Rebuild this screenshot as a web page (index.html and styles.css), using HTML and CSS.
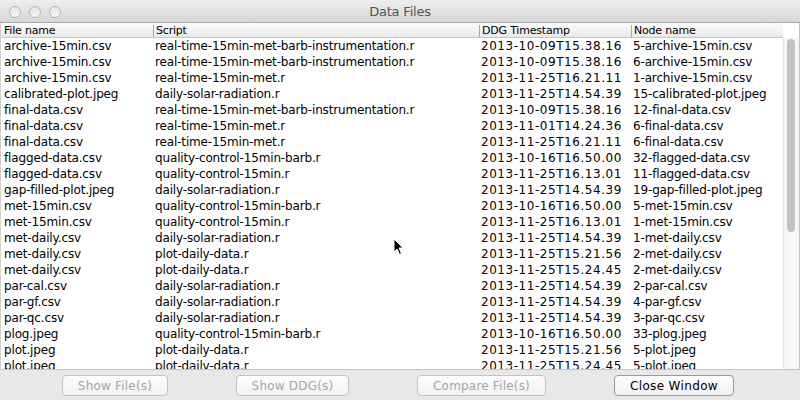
FILE: index.html
```html
<!DOCTYPE html>
<html>
<head>
<meta charset="utf-8">
<link rel="stylesheet" href="styles.css">
</head>
<body>
<div class="window">
  <div class="titlebar">
    <div class="lights"><span class="light"></span><span class="light"></span><span class="light"></span></div>
    <div class="title">Data Files</div>
  </div>
  <div class="pane">
    <div class="table">
      <div class="row head">
        <div class="cell">File name</div>
        <div class="cell sep">Script</div>
        <div class="cell sep">DDG Timestamp</div>
        <div class="cell sep">Node name</div>
      </div>
      <div class="body">
        <div class="row"><div class="cell">archive-15min.csv</div><div class="cell">real-time-15min-met-barb-instrumentation.r</div><div class="cell ts">2013-10-09T15.38.16</div><div class="cell">5-archive-15min.csv</div></div>
        <div class="row"><div class="cell">archive-15min.csv</div><div class="cell">real-time-15min-met-barb-instrumentation.r</div><div class="cell ts">2013-10-09T15.38.16</div><div class="cell">6-archive-15min.csv</div></div>
        <div class="row"><div class="cell">archive-15min.csv</div><div class="cell">real-time-15min-met.r</div><div class="cell ts">2013-11-25T16.21.11</div><div class="cell">1-archive-15min.csv</div></div>
        <div class="row"><div class="cell">calibrated-plot.jpeg</div><div class="cell">daily-solar-radiation.r</div><div class="cell ts">2013-11-25T14.54.39</div><div class="cell">15-calibrated-plot.jpeg</div></div>
        <div class="row"><div class="cell">final-data.csv</div><div class="cell">real-time-15min-met-barb-instrumentation.r</div><div class="cell ts">2013-10-09T15.38.16</div><div class="cell">12-final-data.csv</div></div>
        <div class="row"><div class="cell">final-data.csv</div><div class="cell">real-time-15min-met.r</div><div class="cell ts">2013-11-01T14.24.36</div><div class="cell">6-final-data.csv</div></div>
        <div class="row"><div class="cell">final-data.csv</div><div class="cell">real-time-15min-met.r</div><div class="cell ts">2013-11-25T16.21.11</div><div class="cell">6-final-data.csv</div></div>
        <div class="row"><div class="cell">flagged-data.csv</div><div class="cell">quality-control-15min-barb.r</div><div class="cell ts">2013-10-16T16.50.00</div><div class="cell">32-flagged-data.csv</div></div>
        <div class="row"><div class="cell">flagged-data.csv</div><div class="cell">quality-control-15min.r</div><div class="cell ts">2013-11-25T16.13.01</div><div class="cell">11-flagged-data.csv</div></div>
        <div class="row"><div class="cell">gap-filled-plot.jpeg</div><div class="cell">daily-solar-radiation.r</div><div class="cell ts">2013-11-25T14.54.39</div><div class="cell">19-gap-filled-plot.jpeg</div></div>
        <div class="row"><div class="cell">met-15min.csv</div><div class="cell">quality-control-15min-barb.r</div><div class="cell ts">2013-10-16T16.50.00</div><div class="cell">5-met-15min.csv</div></div>
        <div class="row"><div class="cell">met-15min.csv</div><div class="cell">quality-control-15min.r</div><div class="cell ts">2013-11-25T16.13.01</div><div class="cell">1-met-15min.csv</div></div>
        <div class="row"><div class="cell">met-daily.csv</div><div class="cell">daily-solar-radiation.r</div><div class="cell ts">2013-11-25T14.54.39</div><div class="cell">1-met-daily.csv</div></div>
        <div class="row"><div class="cell">met-daily.csv</div><div class="cell">plot-daily-data.r</div><div class="cell ts">2013-11-25T15.21.56</div><div class="cell">2-met-daily.csv</div></div>
        <div class="row"><div class="cell">met-daily.csv</div><div class="cell">plot-daily-data.r</div><div class="cell ts">2013-11-25T15.24.45</div><div class="cell">2-met-daily.csv</div></div>
        <div class="row"><div class="cell">par-cal.csv</div><div class="cell">daily-solar-radiation.r</div><div class="cell ts">2013-11-25T14.54.39</div><div class="cell">2-par-cal.csv</div></div>
        <div class="row"><div class="cell">par-gf.csv</div><div class="cell">daily-solar-radiation.r</div><div class="cell ts">2013-11-25T14.54.39</div><div class="cell">4-par-gf.csv</div></div>
        <div class="row"><div class="cell">par-qc.csv</div><div class="cell">daily-solar-radiation.r</div><div class="cell ts">2013-11-25T14.54.39</div><div class="cell">3-par-qc.csv</div></div>
        <div class="row"><div class="cell">plog.jpeg</div><div class="cell">quality-control-15min-barb.r</div><div class="cell ts">2013-10-16T16.50.00</div><div class="cell">33-plog.jpeg</div></div>
        <div class="row"><div class="cell">plot.jpeg</div><div class="cell">plot-daily-data.r</div><div class="cell ts">2013-11-25T15.21.56</div><div class="cell">5-plot.jpeg</div></div>
        <div class="row"><div class="cell">plot.jpeg</div><div class="cell">plot-daily-data.r</div><div class="cell ts">2013-11-25T15.24.45</div><div class="cell">5-plot.jpeg</div></div>
      </div>
    </div>
    <div class="scroll">
      <div class="corner"></div>
      <div class="track"><div class="thumb"></div></div>
    </div>
  </div>
  <div class="buttons">
    <button class="btn disabled b1">Show File(s)</button>
    <button class="btn disabled b2">Show DDG(s)</button>
    <button class="btn disabled b3">Compare File(s)</button>
    <button class="btn b4">Close Window</button>
  </div>
  <svg class="cursor" width="12" height="18" viewBox="0 0 12 18">
    <path d="M1 1 L1 14 L4 11 L6.5 16.5 L8.5 15.5 L6 10 L10 10 Z" fill="#000" stroke="#fff" stroke-width="1"/>
  </svg>
</div>
</body>
</html>
```

FILE: styles.css
```css
* { box-sizing: border-box; }
html, body { margin: 0; padding: 0; }
body {
  width: 800px;
  height: 400px;
  overflow: hidden;
  font-family: "DejaVu Sans", sans-serif;
  background: #ececec;
}
.window {
  position: relative;
  width: 800px;
  height: 400px;
  display: flex;
  flex-direction: column;
  background: #e8e8e8;
}
.titlebar {
  height: 23px;
  flex: none;
  position: relative;
  background: linear-gradient(#eeeeee, #d6d6d6);
  border-bottom: 1px solid #a9a9a9;
  display: flex;
  align-items: center;
  justify-content: center;
}
.lights {
  position: absolute;
  left: 9px;
  top: 6px;
  display: flex;
  gap: 8px;
}
.light {
  width: 12px;
  height: 12px;
  border-radius: 50%;
  border: 1px solid #b4b4b4;
  background: linear-gradient(#e4e4e4, #f6f6f6);
}
.title {
  font-size: 13px;
  color: #555;
  letter-spacing: -0.2px;
}
.pane {
  height: 347px;
  flex: none;
  display: flex;
  background: #fff;
  border-bottom: 1px solid #c4c4c4;
  border-right: 1px solid #c4c4c4;
  border-left: 1px solid #d0d0d0;
  overflow: hidden;
}
.table {
  width: 782px;
  flex: none;
  overflow: hidden;
}
.row {
  display: grid;
  grid-template-columns: 152px 326px 152px 152px;
  height: 16px;
  align-items: center;
  font-size: 12px;
  letter-spacing: -0.15px;
  color: #000;
}
.cell {
  padding-left: 2px;
  white-space: nowrap;
  overflow: hidden;
  line-height: 16px;
}
.cell.ts { letter-spacing: 0.55px; }
.row .cell:first-child { padding-left: 3px; }
.head {
  height: 15px;
  font-size: 11px;
  letter-spacing: -0.2px;
  background: linear-gradient(#fbfbfb, #e9e9e9);
  border-bottom: 1px solid #c6c6c6;
  align-items: end;
}
.head .cell { line-height: 12px; height: 12px; margin-bottom: 0; }
.head .sep { border-left: 1px solid #a8a8a8; overflow: visible; }
.scroll {
  flex: 1;
  display: flex;
  flex-direction: column;
}
.corner {
  height: 15px;
  flex: none;
  background: #fff;
}
.track {
  flex: 1;
  background: linear-gradient(90deg, #f2f2f2, #fafafa 60%, #f4f4f4);
  border-left: 1px solid #e6e6e6;
  padding: 1px 3px 0 3px;
}
.thumb {
  width: 8px;
  height: 193px;
  border-radius: 4px;
  background: #c2c2c2;
}
.buttons {
  flex: 1;
  position: relative;
}
.btn {
  position: absolute;
  top: 5px;
  height: 21px;
  font-family: "DejaVu Sans", sans-serif;
  font-size: 12px;
  letter-spacing: 0.2px;
  border: 1px solid #b0b0b0;
  border-radius: 4px;
  background: linear-gradient(#fdfdfd, #f1f1f1);
  padding: 0;
  color: #000;
}
.btn.disabled { color: #a6a6a6; border-color: #c2c2c2; }
.b1 { left: 62px; width: 106px; }
.b2 { left: 236px; width: 113px; }
.b3 { left: 417px; width: 129px; }
.b4 { left: 614px; width: 120px; border-color: #9a9a9a; letter-spacing: 0.35px; }
.cursor {
  position: absolute;
  left: 393px;
  top: 238px;
}
```
